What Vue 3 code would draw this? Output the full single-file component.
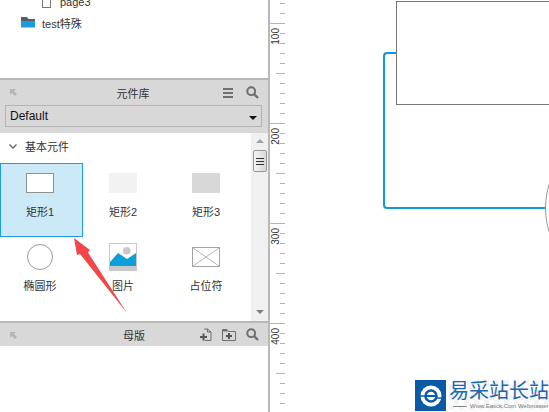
<script setup>
const widgets = [
  { name: '矩形1', icon: 'box', selected: true },
  { name: '矩形2', icon: 'light' },
  { name: '矩形3', icon: 'dark' },
  { name: '椭圆形', icon: 'circle' },
  { name: '图片', icon: 'image' },
  { name: '占位符', icon: 'placeholder' }
];

// one ruler cell every 10px, the tick at y=23 is the 100 mark
const ticks = Array.from({ length: 41 }, (_, i) => {
  const value = 80 + i * 10;
  return {
    value,
    kind: value % 100 === 0 ? 'major' : value % 50 === 0 ? 'mid' : 'minor'
  };
});
</script>

<template>
  <div class="app">
    <aside class="left">
      <section class="pages">
        <div class="page-row sub">
          <svg class="page-icon" width="9" height="8" viewBox="0 0 9 8"><rect x="0.5" y="-4" width="8" height="11.5" fill="#fff" stroke="#777" /></svg>
          <span>page3</span>
        </div>
        <div class="page-row">
          <svg class="folder" width="15" height="11" viewBox="0 0 15 11">
            <path d="M0 0H6L7.500 2H14V5H0Z" fill="#555f68" />
            <path d="M0 4H14V10.500H0Z" fill="#1e9bdc" />
          </svg>
          <span>test特殊</span>
        </div>
      </section>

      <section class="panel">
        <header class="head">
          <svg class="collapse" width="9" height="9" viewBox="0 0 9 9"><path d="M1 7V1H7L5 3L8 6L6 8L3 5L1 7Z" fill="#b5b5b5" /></svg>
          <span class="title">元件库</span>
          <div class="tools">
            <svg width="11" height="10" viewBox="0 0 11 10"><path d="M0 0H10V2H0ZM0 4H10V6H0ZM0 8H10V10H0Z" fill="#6f6f6f" /></svg>
            <svg width="13" height="13" viewBox="0 0 13 13"><circle cx="5.200" cy="5.200" r="3.900" fill="none" stroke="#6f6f6f" stroke-width="2" /><path d="M8 8L12 12" stroke="#6f6f6f" stroke-width="2.400" /></svg>
          </div>
        </header>
        <div class="select-wrap">
          <div class="select">
            <span>Default</span>
            <i class="caret"></i>
          </div>
        </div>
        <div class="library">
          <div class="library-main">
            <div class="group">
              <svg width="8" height="5" viewBox="0 0 8 5"><path d="M0.500 0.500L4 4L7.500 0.500" fill="none" stroke="#666" stroke-width="1.300" /></svg>
              <span>基本元件</span>
            </div>
            <div class="grid">
              <div v-for="item in widgets" :key="item.name" class="widget" :class="{ selected: item.selected }">
                <div class="thumb">
                  <div v-if="item.icon === 'box'" class="shape box"></div>
                  <div v-else-if="item.icon === 'light'" class="shape light"></div>
                  <div v-else-if="item.icon === 'dark'" class="shape dark"></div>
                  <div v-else-if="item.icon === 'circle'" class="round"></div>
                  <svg v-else-if="item.icon === 'image'" width="28" height="28" viewBox="0 0 28 28">
                    <rect x="0.500" y="0.500" width="27" height="27" fill="#fff" stroke="#c9c9c9" />
                    <circle cx="17.700" cy="7.700" r="3.800" fill="#c9c9c9" />
                    <path d="M1 19L9 10L18 16L27 10V23H1Z" fill="#0a9fda" />
                    <rect x="1" y="23" width="26" height="4.500" fill="#c9c9c9" />
                  </svg>
                  <svg v-else width="28" height="20" viewBox="0 0 28 20">
                    <rect x="0.500" y="0.500" width="27" height="19" fill="#fff" stroke="#a3a3a3" />
                    <path d="M1 1L27 19M27 1L1 19" stroke="#b5b5b5" />
                  </svg>
                </div>
                <span class="label">{{ item.name }}</span>
              </div>
            </div>
          </div>
          <div class="scrollbar">
            <i class="arrow up"></i>
            <div class="thumb-bar"><b></b><b></b><b></b></div>
            <i class="arrow down"></i>
          </div>
        </div>
      </section>

      <section class="panel masters">
        <header class="head">
          <svg class="collapse" width="9" height="9" viewBox="0 0 9 9"><path d="M1 7V1H7L5 3L8 6L6 8L3 5L1 7Z" fill="#b5b5b5" /></svg>
          <span class="title">母版</span>
          <div class="tools">
            <svg width="13" height="13" viewBox="0 0 13 13"><path d="M5 1H8.500L12 4V12.500H6" fill="none" stroke="#6f6f6f" /><path d="M8.500 1V4H12" fill="none" stroke="#6f6f6f" /><path d="M1 9H8M4.500 5.500V12.500" stroke="#555" stroke-width="2" /></svg>
            <svg width="14" height="12" viewBox="0 0 14 12"><path d="M0.500 11.500V0.500H5L6.500 2.500H13.500V11.500Z" fill="none" stroke="#6f6f6f" /><path d="M0 1H5L6 2.500H0Z" fill="#6f6f6f" /><path d="M4 7H10M7 4V10" stroke="#555" stroke-width="2" /></svg>
            <svg width="13" height="13" viewBox="0 0 13 13"><circle cx="5.200" cy="5.200" r="3.900" fill="none" stroke="#6f6f6f" stroke-width="2" /><path d="M8 8L12 12" stroke="#6f6f6f" stroke-width="2.400" /></svg>
          </div>
        </header>
      </section>
    </aside>

    <div class="ruler">
      <div v-for="tick in ticks" :key="tick.value" class="cell">
        <i class="tick" :class="tick.kind"></i>
        <span v-if="tick.kind === 'major'" class="num">{{ tick.value }}</span>
      </div>
    </div>

    <main class="canvas">
      <div class="node"></div>
      <div class="connector"></div>
      <div class="circle"></div>
      <div class="logo">
        <div class="mark">
          <svg width="24" height="24" viewBox="0 0 24 24">
            <circle cx="12" cy="12" r="10.500" fill="#fff" />
            <circle cx="12" cy="12" r="5.500" fill="none" stroke="#0b5aa6" stroke-width="2.500" />
            <path d="M7 12H17" stroke="#0b5aa6" stroke-width="2" />
            <path d="M1 12H6M18 14H23" stroke="#0b5aa6" stroke-width="1.500" />
          </svg>
        </div>
        <div class="brand">
          <div class="brand-name">易采站长站</div>
          <div class="brand-sub"><i></i><span>Www.Easck.Com Webmaster</span></div>
        </div>
      </div>
    </main>

    <svg class="pointer" width="60" height="80" viewBox="0 0 60 80">
      <path d="M2 2L18 14L16 16.500L55 77L8 18L5 19Z" fill="#f2474a" />
    </svg>
  </div>
</template>

<style scoped>
.app {
  position: relative;
  display: flex;
  width: 549px;
  height: 412px;
  overflow: hidden;
  background: #fff;
  color: #333;
  font-family: "Liberation Sans", "Noto Sans CJK SC", sans-serif;
  font-size: 11px;
}

.left {
  display: flex;
  flex-direction: column;
  flex: none;
  width: 268px;
  height: 412px;
  border-right: 2px solid #b8b8b8;
}

.pages {
  flex: none;
  height: 78px;
  padding-left: 21px;
}

.page-row {
  display: flex;
  align-items: center;
  gap: 6px;
  height: 23px;
  margin-top: 3px;
}

.page-row.sub {
  height: 8px;
  margin-top: 0;
  padding-left: 21px;
  gap: 9px;
  align-items: flex-end;
}

.page-icon {
  display: block;
}

.folder {
  display: block;
}

.panel {
  flex: none;
  border-top: 2px solid #b8b8b8;
}

.head {
  position: relative;
  display: flex;
  align-items: center;
  justify-content: center;
  height: 25px;
  background: #d8d8d8;
}

.collapse {
  position: absolute;
  left: 9px;
  top: 8px;
}

.title {
  color: #333;
  font-size: 11px;
  margin-left: -2px;
}

.tools {
  position: absolute;
  right: 9px;
  top: 0;
  bottom: 0;
  display: flex;
  align-items: center;
  gap: 12px;
}

.select-wrap {
  height: 28px;
  padding: 0 6px 0 5px;
  background: #d8d8d8;
}

.select {
  position: relative;
  display: flex;
  align-items: center;
  height: 22px;
  padding-left: 4px;
  border: 1px solid #b4b4b4;
  box-sizing: border-box;
  color: #111;
  font-size: 12px;
}

.caret {
  position: absolute;
  right: 4px;
  top: 10px;
  border: 4px solid transparent;
  border-top: 4px solid #111;
  border-bottom: 0;
}

.library {
  display: flex;
  height: 188px;
}

.library-main {
  flex: 1;
  min-width: 0;
}

.group {
  display: flex;
  align-items: center;
  gap: 8px;
  height: 26px;
  margin-bottom: 4px;
  padding-left: 9px;
  font-size: 11px;
  color: #333;
}

.grid {
  display: grid;
  grid-template-columns: repeat(3, 83px);
  grid-auto-rows: 74px;
}

.widget {
  display: flex;
  flex-direction: column;
  align-items: center;
  box-sizing: border-box;
  height: 74px;
  padding: 6px 3px 0 0;
}

.widget.selected {
  background: #cce9f7;
  outline: 1px solid #1e9bdc;
  outline-offset: -1px;
}

.thumb {
  display: flex;
  align-items: center;
  justify-content: center;
  height: 28px;
}

.shape {
  box-sizing: border-box;
  width: 28px;
  height: 20px;
}

.box {
  background: #fff;
  border: 1px solid #909090;
}

.light {
  background: #f2f2f2;
}

.dark {
  background: #d7d7d7;
}

.round {
  box-sizing: border-box;
  width: 26px;
  height: 26px;
  border: 1px solid #999;
  border-radius: 50%;
  background: #fff;
}

.label {
  margin-top: 6px;
  color: #333;
  font-size: 11px;
}

.scrollbar {
  position: relative;
  flex: none;
  width: 17px;
  background: #f0f0f0;
}

.arrow {
  position: absolute;
  left: 5px;
  border: 4px solid transparent;
}

.arrow.up {
  top: 6px;
  border-top: 0;
  border-bottom: 4px solid #a0a0a0;
}

.arrow.down {
  bottom: 7px;
  border-bottom: 0;
  border-top: 4px solid #808080;
}

.thumb-bar {
  position: absolute;
  left: 2px;
  top: 17px;
  display: flex;
  flex-direction: column;
  align-items: center;
  justify-content: center;
  gap: 2px;
  box-sizing: border-box;
  width: 14px;
  height: 22px;
  border: 1px solid #999;
  border-radius: 2px;
  background: linear-gradient(to right, #f4f4f4, #d8d8d8);
}

.thumb-bar b {
  display: block;
  width: 8px;
  height: 1px;
  background: #333;
}

.masters .head {
  height: 23px;
}

.masters .title {
  margin-left: 0;
}

.masters .tools {
  gap: 10px;
}

.ruler {
  flex: none;
  width: 15px;
  height: 412px;
  padding-top: 3px;
  box-sizing: border-box;
  overflow: hidden;
}

.cell {
  position: relative;
  display: flex;
  justify-content: flex-end;
  height: 10px;
}

.tick {
  display: block;
  height: 1px;
  background: #b5b5b5;
}

.tick.minor {
  width: 5px;
}

.tick.mid {
  width: 9px;
}

.tick.major {
  width: 15px;
}

.num {
  position: absolute;
  left: 1px;
  top: 5px;
  writing-mode: vertical-rl;
  transform: rotate(180deg);
  color: #333;
  font-size: 10px;
  line-height: 9px;
}

.canvas {
  position: relative;
  flex: 1;
  min-width: 0;
}

.node {
  position: absolute;
  left: 111px;
  top: 1px;
  width: 180px;
  height: 104px;
  box-sizing: border-box;
  border: 1px solid #777;
}

.connector {
  position: absolute;
  left: 98px;
  top: 52px;
  width: 170px;
  height: 157px;
  box-sizing: border-box;
  border: 2px solid #0d9bd3;
  border-right: 0;
  border-radius: 4px 0 0 4px;
  clip-path: polygon(0 0, 13px 0, 13px 2px, 100% 2px, 100% 100%, 0 100%);
}

.circle {
  position: absolute;
  left: 260px;
  top: 128px;
  width: 160px;
  height: 160px;
  box-sizing: border-box;
  border: 1px solid #999;
  border-radius: 50%;
  background: #fff;
}

.logo {
  position: absolute;
  left: 130px;
  top: 380px;
  display: flex;
  gap: 3px;
  white-space: nowrap;
}

.mark {
  display: flex;
  flex: none;
  align-items: center;
  justify-content: center;
  width: 31px;
  height: 31px;
  background: #0b5aa6;
}

.brand {
  background: repeating-conic-gradient(#f3f3f3 0 25%, #fff 0 50%) 0 0 / 10px 10px;
}

.brand-name {
  color: #1a68ae;
  font-size: 20px;
  line-height: 22px;
}

.brand-sub {
  display: flex;
  align-items: center;
  gap: 3px;
  padding-left: 4px;
  color: #777;
  font-size: 6px;
  line-height: 8px;
}

.brand-sub i {
  display: block;
  width: 14px;
  height: 1px;
  background: #888;
}

.pointer {
  position: absolute;
  left: 72px;
  top: 236px;
}
</style>
